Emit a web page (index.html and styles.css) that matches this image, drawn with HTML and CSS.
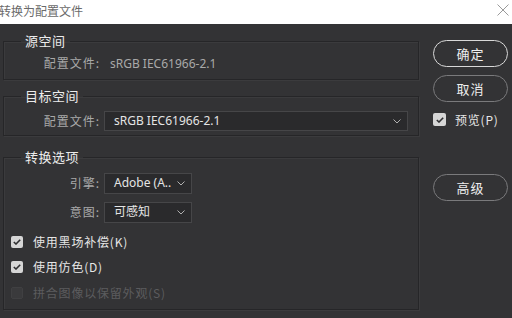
FILE: index.html
```html
<!DOCTYPE html>
<html lang="zh">
<head>
<meta charset="utf-8">
<link rel="stylesheet" href="styles.css">
</head>
<body>
<div class="titlebar">
  <span class="title">转换为配置文件</span>
  <svg class="close" width="12" height="12" viewBox="0 0 12 12"><path d="M0.5 0.5L11.5 11.5M11.5 0.5L0.5 11.5" stroke="#9a9a9a" stroke-width="1" fill="none"/></svg>
</div>
<div class="main">
  <div class="left">
    <fieldset class="group g1">
      <legend>源空间</legend>
      <div class="row">
        <span class="label">配置文件:</span>
        <span class="value">sRGB IEC61966-2.1</span>
      </div>
    </fieldset>
    <fieldset class="group g2">
      <legend>目标空间</legend>
      <div class="row">
        <span class="label">配置文件:</span>
        <div class="select wide"><span>sRGB IEC61966-2.1</span><svg class="chev" width="8" height="5" viewBox="0 0 8 5"><path d="M0.5 0.5L4 4L7.5 0.5" stroke="#b0b0b0" fill="none"/></svg></div>
      </div>
    </fieldset>
    <fieldset class="group g3">
      <legend>转换选项</legend>
      <div class="row">
        <span class="label">引擎:</span>
        <div class="select small"><span>Adobe (A..</span><svg class="chev" width="8" height="5" viewBox="0 0 8 5"><path d="M0.5 0.5L4 4L7.5 0.5" stroke="#b0b0b0" fill="none"/></svg></div>
      </div>
      <div class="row r2">
        <span class="label">意图:</span>
        <div class="select small"><span>可感知</span><svg class="chev" width="8" height="5" viewBox="0 0 8 5"><path d="M0.5 0.5L4 4L7.5 0.5" stroke="#b0b0b0" fill="none"/></svg></div>
      </div>
      <div class="check first"><span class="box on"><svg width="8" height="6" viewBox="0 0 8 6"><path d="M0.8 3L3 5L7.2 0.8" stroke="#2e2e30" stroke-width="1.6" fill="none"/></svg></span><span>使用黑场补偿(K)</span></div>
      <div class="check"><span class="box on"><svg width="8" height="6" viewBox="0 0 8 6"><path d="M0.8 3L3 5L7.2 0.8" stroke="#2e2e30" stroke-width="1.6" fill="none"/></svg></span><span>使用仿色(D)</span></div>
      <div class="check disabled"><span class="box off"></span><span>拼合图像以保留外观(S)</span></div>
    </fieldset>
  </div>
  <div class="right">
    <button class="btn primary">确定</button>
    <button class="btn">取消</button>
    <div class="check preview"><span class="box on"><svg width="8" height="6" viewBox="0 0 8 6"><path d="M0.8 3L3 5L7.2 0.8" stroke="#2e2e30" stroke-width="1.6" fill="none"/></svg></span><span>预览(P)</span></div>
    <button class="btn adv">高级</button>
  </div>
</div>
</body>
</html>
```
FILE: styles.css
```css
* { box-sizing: border-box; }
html, body { margin: 0; padding: 0; }
body {
  width: 512px;
  height: 318px;
  overflow: hidden;
  background: #333335;
  font-family: "Noto Sans CJK SC", "Noto Sans", sans-serif;
  font-size: 12px;
  color: #e6e6e6;
}
.titlebar {
  height: 24px;
  background: #ffffff;
  display: flex;
  align-items: center;
  justify-content: space-between;
  padding: 0 3px 2px 0;
}
.title {
  font-size: 12px;
  line-height: 14px;
  color: #6a6a6a;
  margin-left: -1px;
}
.close { margin-top: -2px; }
.main {
  display: flex;
  align-items: flex-start;
}
.left {
  width: 416px;
  margin-left: 3px;
  display: flex;
  flex-direction: column;
}
.group {
  margin: 0;
  padding: 0 0 0 39px;
  border: 1px solid #262628;
  box-shadow: inset 1px 1px 0 #3b3b3d, 1px 1px 0 #3b3b3d;
  min-width: 0;
}
.group legend {
  font-size: 13px;
  line-height: 14px;
  padding: 0 4px;
  margin-left: -22px;
  color: #ececec;
  letter-spacing: 0.5px;
}
.g1 { margin-top: 10px; padding-top: 8px; padding-bottom: 9px; }
.g2 { margin-top: 9px; padding-top: 8px; padding-bottom: 4px; }
.g3 { margin-top: 14px; padding-top: 9px; padding-bottom: 9px; padding-left: 0; }
.g3 legend { margin-left: 17px; }
.row {
  display: flex;
  align-items: center;
  height: 20px;
}
.g1 .row { height: 14px; }
.g3 .row { padding-left: 39px; }
.r2 { margin-top: 9px; }
.label {
  width: 57px;
  text-align: right;
  color: #a9a9a9;
  letter-spacing: 1px;
  margin-right: 4px;
  line-height: 14px;
}
.value {
  color: #a9a9a9;
  padding-left: 6px;
  font-family: "Noto Sans", sans-serif;
  font-size: 12px;
}
.select {
  height: 20px;
  background: #2a2a2c;
  border: 1px solid #464648;
  display: flex;
  align-items: center;
  justify-content: space-between;
  padding: 0 6px 0 9px;
  color: #e4e4e4;
}
.select span { font-family: "Noto Sans", "Noto Sans CJK SC", sans-serif; font-size: 12px; line-height: 14px; }
.select.wide { width: 304px; }
.select.small { width: 88px; height: 21px; }
.chev { flex: none; }
.check {
  display: flex;
  align-items: center;
  height: 14px;
  padding-left: 7px;
  color: #e6e6e6;
  line-height: 14px;
  letter-spacing: 0.8px;
}
.check.first { margin-top: 13px; }
.check + .check { margin-top: 11px; }
.check.disabled { color: #5c5c5e; margin-top: 12px; }
.box {
  width: 12px;
  height: 12px;
  border-radius: 2px;
  margin-right: 10px;
  display: flex;
  align-items: center;
  justify-content: center;
  flex: none;
}
.box.on { background: #d6d6d6; }
.box.off { background: #3a3a3c; border: 1px solid #404042; }
.right {
  width: 75px;
  margin-left: 14px;
  margin-top: 16px;
  display: flex;
  flex-direction: column;
}
.btn {
  width: 75px;
  height: 27px;
  border-radius: 14px;
  background: transparent;
  border: 1.5px solid #7a7a7c;
  color: #eeeeee;
  font-family: "Noto Sans CJK SC", sans-serif;
  font-size: 13px;
  padding: 0;
  letter-spacing: 1px;
}
.btn.primary { border-color: #d8d8d8; }
.btn + .btn { margin-top: 8px; }
.preview { padding-left: 0; margin-top: 11px; height: 13px; }
.preview .box { width: 13px; height: 13px; margin-right: 9px; }
.adv { margin-top: 48px; }
```
